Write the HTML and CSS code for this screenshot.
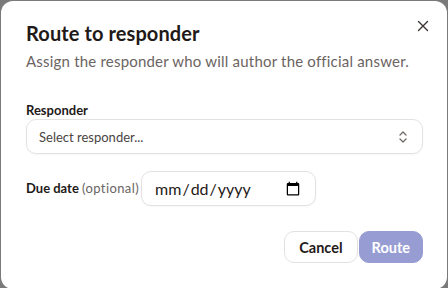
FILE: index.html
```html
<!DOCTYPE html>
<html>
<head>
<meta charset="utf-8">
<link rel="stylesheet" href="styles.css">
</head>
<body>
<div class="dialog">
  <button class="close" aria-label="Close">
    <svg width="12" height="12" viewBox="0 0 12 12"><path d="M1.5 1.5 L10.5 10.5 M10.5 1.5 L1.5 10.5" stroke="#3a3533" stroke-width="1.4" stroke-linecap="round"/></svg>
  </button>
  <h1 class="title">Route to responder</h1>
  <p class="subtitle">Assign the responder who will author the official answer.</p>
  <div class="field">
    <label class="label">Responder</label>
    <div class="select">
      <span class="placeholder">Select responder...</span>
      <svg width="10" height="14" viewBox="0 0 10 14"><path d="M2 5 L5 2 L8 5 M2 9 L5 12 L8 9" fill="none" stroke="#6f6a68" stroke-width="1.3" stroke-linecap="round" stroke-linejoin="round"/></svg>
    </div>
  </div>
  <div class="row">
    <label class="label">Due date <span class="optional">(optional)</span></label>
    <input class="date" type="date">
  </div>
  <div class="actions">
    <button class="btn cancel">Cancel</button>
    <button class="btn route">Route</button>
  </div>
</div>
</body>
</html>
```
FILE: styles.css
```css
html, body {
  margin: 0;
  padding: 0;
  width: 448px;
  height: 288px;
  background: #7a7a7a;
  overflow: hidden;
}
.dialog {
  position: relative;
  box-sizing: border-box;
  margin: 1px 1px 0 1px;
  width: 446px;
  height: 288px;
  background: #fff;
  border-radius: 12px;
  padding: 19px 24px 0 25px;
  font-family: Lato, "Noto Sans", sans-serif;
  color: #1f1a18;
}
.close {
  position: absolute;
  top: 17px;
  right: 16px;
  width: 16px;
  height: 16px;
  padding: 0;
  border: none;
  background: none;
  display: flex;
  align-items: center;
  justify-content: center;
}
.title {
  margin: 0;
  font-size: 20px;
  font-weight: 700;
  line-height: 26px;
  letter-spacing: 0.1px;
}
.subtitle {
  margin: 5px 0 0 0;
  font-size: 15px;
  line-height: 20px;
  color: #6b6462;
  letter-spacing: 0.2px;
}
.field {
  margin-top: 31px;
  display: flex;
  flex-direction: column;
  gap: 0;
}
.label {
  font-size: 13px;
  font-weight: 700;
  line-height: 17px;
  color: #1f1a18;
}
.optional {
  font-weight: 400;
  color: #6b6462;
  letter-spacing: 0.4px;
}
.select {
  box-sizing: border-box;
  height: 35px;
  width: 397px;
  border: 1px solid #e4e2e1;
  border-radius: 10px;
  padding: 0 14px 0 12px;
  display: flex;
  align-items: center;
  justify-content: space-between;
  box-shadow: 0 1px 2px rgba(0,0,0,0.04);
}
.placeholder {
  font-size: 13px;
  color: #4a4442;
}
.row {
  margin-top: 17px;
  display: flex;
  align-items: center;
  gap: 2px;
}
.date {
  box-sizing: border-box;
  width: 175px;
  height: 35px;
  border: 1px solid #e4e2e1;
  border-radius: 10px;
  padding: 0 12px;
  font-family: Lato, "Noto Sans", sans-serif;
  font-size: 16px;
  color: #1f1a18;
  background: #fff;
  box-shadow: 0 1px 2px rgba(0,0,0,0.04);
}
.actions {
  margin-top: 25px;
  display: flex;
  justify-content: flex-end;
  gap: 1px;
}
.btn {
  height: 32px;
  border-radius: 10px;
  font-family: Lato, "Noto Sans", sans-serif;
  font-size: 14.5px;
  font-weight: 700;
}
.cancel {
  padding: 0 14px;
  background: #fff;
  border: 1px solid #e4e2e1;
  color: #1f1a18;
}
.route {
  padding: 0 12px;
  background: #979dd3;
  border: 1px solid #979dd3;
  color: #fff;
}
```
